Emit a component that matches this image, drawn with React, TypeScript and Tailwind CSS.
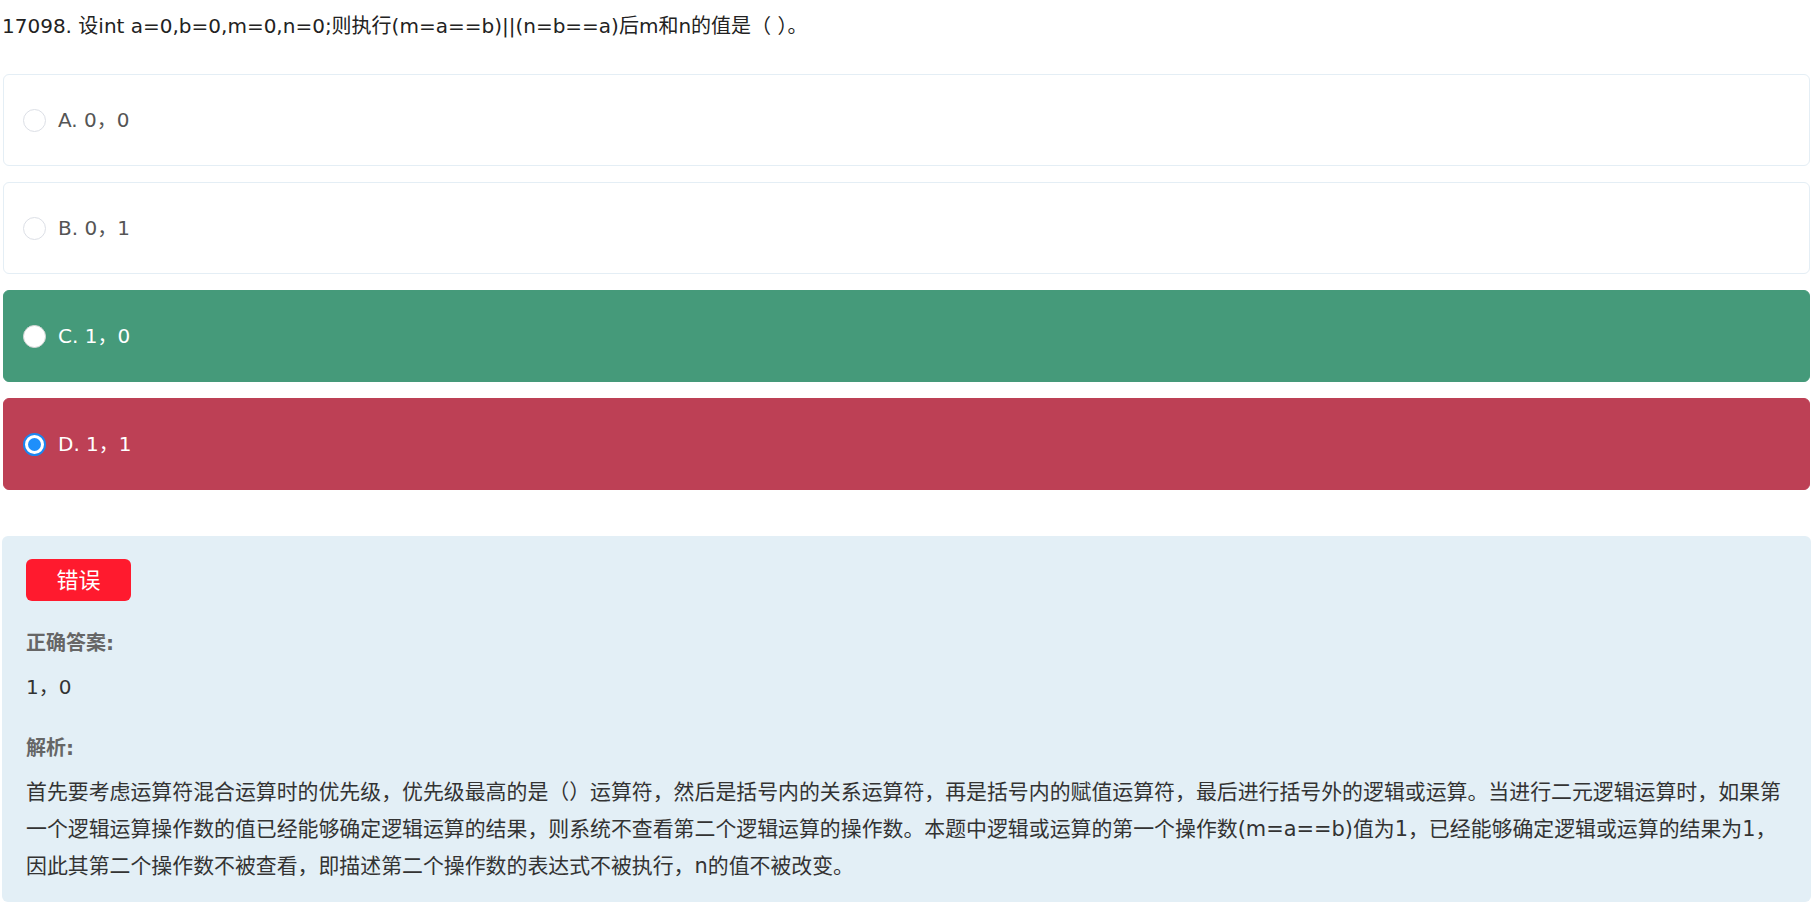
import React from "react";

const font = {
  fontFamily: '"DejaVu Sans", "Noto Sans CJK SC", sans-serif',
};

type Opt = { label: string; state: "none" | "correct" | "wrong" };

const options: Opt[] = [
  { label: "A. 0，0", state: "none" },
  { label: "B. 0，1", state: "none" },
  { label: "C. 1，0", state: "correct" },
  { label: "D. 1，1", state: "wrong" },
];

function Radio({ state }: { state: Opt["state"] }) {
  if (state === "wrong") {
    return (
      <span className="flex h-[23px] w-[23px] shrink-0 items-center justify-center rounded-full border-2 border-[#1a86f0] bg-white">
        <span className="h-[13px] w-[13px] rounded-full bg-[#1e8ffb]" />
      </span>
    );
  }
  if (state === "correct") {
    return <span className="h-[23px] w-[23px] shrink-0 rounded-full border border-[#d6d6d6] bg-white" />;
  }
  return <span className="h-[23px] w-[23px] shrink-0 rounded-full border border-[#dcdfe6] bg-white" />;
}

function Option({ opt }: { opt: Opt }) {
  const cls =
    opt.state === "correct"
      ? "bg-[#459a7a] border-[#459a7a] text-white"
      : opt.state === "wrong"
      ? "bg-[#bd4055] border-[#bd4055] text-white"
      : "bg-white border-[#e4eef5] text-[#555555]";
  return (
    <div className={`flex h-[92px] items-center gap-[12px] rounded-[6px] border pl-[19px] ${cls}`}>
      <Radio state={opt.state} />
      <span className="text-[20px] leading-[30px]">{opt.label}</span>
    </div>
  );
}

export default function App() {
  return (
    <div className="min-h-[905px] bg-white px-[2px] text-[#333333]" style={font}>
      <div className="pt-[11px] text-[20px] leading-[30px] text-[#222222]">
        17098. 设int a=0,b=0,m=0,n=0;则执行(m=a==b)||(n=b==a)后m和n的值是（ ）。
      </div>
      <div className="mt-[33px] flex flex-col gap-[16px] px-[1px]">
        {options.map((o) => (
          <Option key={o.label} opt={o} />
        ))}
      </div>
      <div className="mt-[46px] rounded-[6px] bg-[#e3eff6] pb-[17px] pl-[24px] pr-[20px] pt-[23px]">
        <div className="flex h-[42px] w-[105px] items-center justify-center rounded-[6px] bg-[#ff1a2e] text-[22px] text-white">
          错误
        </div>
        <div className="mt-[27px] text-[20px] font-bold leading-[30px] text-[#666666]">正确答案:</div>
        <div className="mt-[14px] text-[20px] leading-[30px] text-[#333333]">1，0</div>
        <div className="mt-[31px] text-[20px] font-bold leading-[30px] text-[#666666]">解析:</div>
        <p className="mt-[11px] text-[20.9px] leading-[37px] text-[#333333]">
          首先要考虑运算符混合运算时的优先级，优先级最高的是（）运算符，然后是括号内的关系运算符，再是括号内的赋值运算符，最后进行括号外的逻辑或运算。当进行二元逻辑运算时，如果第一个逻辑运算操作数的值已经能够确定逻辑运算的结果，则系统不查看第二个逻辑运算的操作数。本题中逻辑或运算的第一个操作数(m=a==b)值为1，已经能够确定逻辑或运算的结果为1，因此其第二个操作数不被查看，即描述第二个操作数的表达式不被执行，n的值不被改变。
        </p>
      </div>
    </div>
  );
}
